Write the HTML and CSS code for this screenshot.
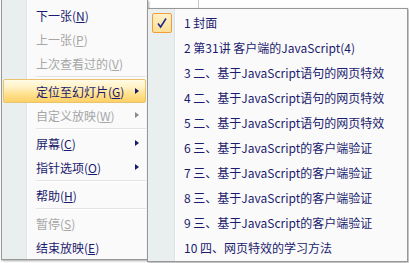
FILE: index.html
```html
<!DOCTYPE html>
<html lang="zh-CN">
<head>
    <meta charset="UTF-8">
    <title>幻灯片放映菜单</title>
    <link rel="stylesheet" href="styles.css">
</head>
<body>
    <div class="screen">
        <!-- Main context menu -->
        <ul class="menu menu-main">
            <li class="item">下一张(<u>N</u>)</li>
            <li class="item disabled">上一张(<u>P</u>)</li>
            <li class="item disabled">上次查看过的(<u>V</u>)</li>
            <li class="sep"></li>
            <li class="item active">定位至幻灯片(<u>G</u>)<span class="arrow"></span></li>
            <li class="item disabled">自定义放映(<u>W</u>)<span class="arrow"></span></li>
            <li class="sep"></li>
            <li class="item">屏幕(<u>C</u>)<span class="arrow"></span></li>
            <li class="item">指针选项(<u>O</u>)<span class="arrow"></span></li>
            <li class="sep"></li>
            <li class="item">帮助(<u>H</u>)</li>
            <li class="sep"></li>
            <li class="item disabled">暂停(<u>S</u>)</li>
            <li class="item">结束放映(<u>E</u>)</li>
        </ul>

        <!-- Slide list flyout -->
        <ul class="menu menu-sub">
            <li class="item">
                <span class="slot">
                    <span class="check">
                        <svg width="12" height="12" viewBox="0 0 12 12">
                            <path d="M2 6.5 L4.6 10 L10 1.5" fill="none" stroke="#1d2f8a" stroke-width="1.6"/>
                        </svg>
                    </span>
                </span>
                1 封面
            </li>
            <li class="item"><span class="slot"></span>2 第31讲 客户端的JavaScript(4)</li>
            <li class="item"><span class="slot"></span>3 二、基于JavaScript语句的网页特效</li>
            <li class="item"><span class="slot"></span>4 二、基于JavaScript语句的网页特效</li>
            <li class="item"><span class="slot"></span>5 二、基于JavaScript语句的网页特效</li>
            <li class="item"><span class="slot"></span>6 三、基于JavaScript的客户端验证</li>
            <li class="item"><span class="slot"></span>7 三、基于JavaScript的客户端验证</li>
            <li class="item"><span class="slot"></span>8 三、基于JavaScript的客户端验证</li>
            <li class="item"><span class="slot"></span>9 三、基于JavaScript的客户端验证</li>
            <li class="item"><span class="slot"></span>10 四、网页特效的学习方法</li>
        </ul>
    </div>
</body>
</html>
```

FILE: styles.css
```css
/* Reset */
* {
    margin: 0;
    padding: 0;
    box-sizing: border-box;
}

body {
    font-family: "Noto Sans CJK SC", sans-serif;
    font-size: 12px;
    color: #1a1a6e;
    background: #fff;
    overflow: hidden;
}

.screen {
    display: flex;
    align-items: flex-start;
    width: 409px;
    height: 263px;
    /* thin line of the slide behind the menus */
    background: linear-gradient(to right, transparent 198px, #c9c9c9 198px 199px, transparent 199px) no-repeat 0 0 / 100% 8px;
}

/* Shared menu look */
.menu {
    list-style: none;
    border: 1px solid #979797;
    box-shadow: 1px 1px 2px rgba(0, 0, 0, 0.35);
}

.item {
    display: flex;
    align-items: center;
    white-space: nowrap;
}

u {
    text-underline-offset: 1px;
}

/* Main menu */
.menu-main {
    width: 147px;
    height: 260px;
    margin-left: 1px;
    border-top: none;
    padding: 3px 1px 0;
    background: linear-gradient(to right, #e9eeee 0 24px, #dde1e1 24px 25px, #fff 25px 26px, #fafafa 26px);
}

.menu-main .item {
    height: 24px;
    padding-left: 33px;
}

.menu-main .sep {
    height: 4px;
    margin-left: 33px;
    border-top: 1px solid #e2e3e3;
    margin-top: 1px;
    height: 3px;
    background: linear-gradient(#fff 0 1px, transparent 1px);
}

.item.disabled {
    color: #a6a6a6;
}

.item.active {
    border: 1px solid #e9c36e;
    border-radius: 2px;
    background: linear-gradient(#fffbe6 0%, #fff1c2 35%, #ffe394 60%, #fdd065 100%);
    padding-left: 32px;
}

.arrow {
    margin-left: auto;
    margin-right: 7px;
    width: 0;
    height: 0;
    border-left: 4px solid #1a1a6e;
    border-top: 3.5px solid transparent;
    border-bottom: 3.5px solid transparent;
}

.item.active .arrow {
    margin-right: 6px;
}

.item.disabled .arrow {
    border-left-color: #8a8a8a;
}

/* Slide list submenu */
.menu-sub {
    width: 261px;
    height: 254px;
    margin-top: 8px;
    margin-left: -1px;
    padding-top: 1px;
    background: linear-gradient(to right, #e9eeee 0 26px, #dde1e1 26px 27px, #fff 27px 28px, #fafafa 28px);
}

.menu-sub .item {
    height: 25px;
}

.slot {
    width: 28px;
    height: 25px;
    margin-right: 8px;
    display: flex;
    align-items: center;
    padding-left: 4px;
}

.check {
    width: 20px;
    height: 20px;
    border: 1px solid #f29d3a;
    border-radius: 2px;
    background: linear-gradient(#fff0c8, #fddf96);
    display: flex;
    align-items: center;
    justify-content: center;
}
```
